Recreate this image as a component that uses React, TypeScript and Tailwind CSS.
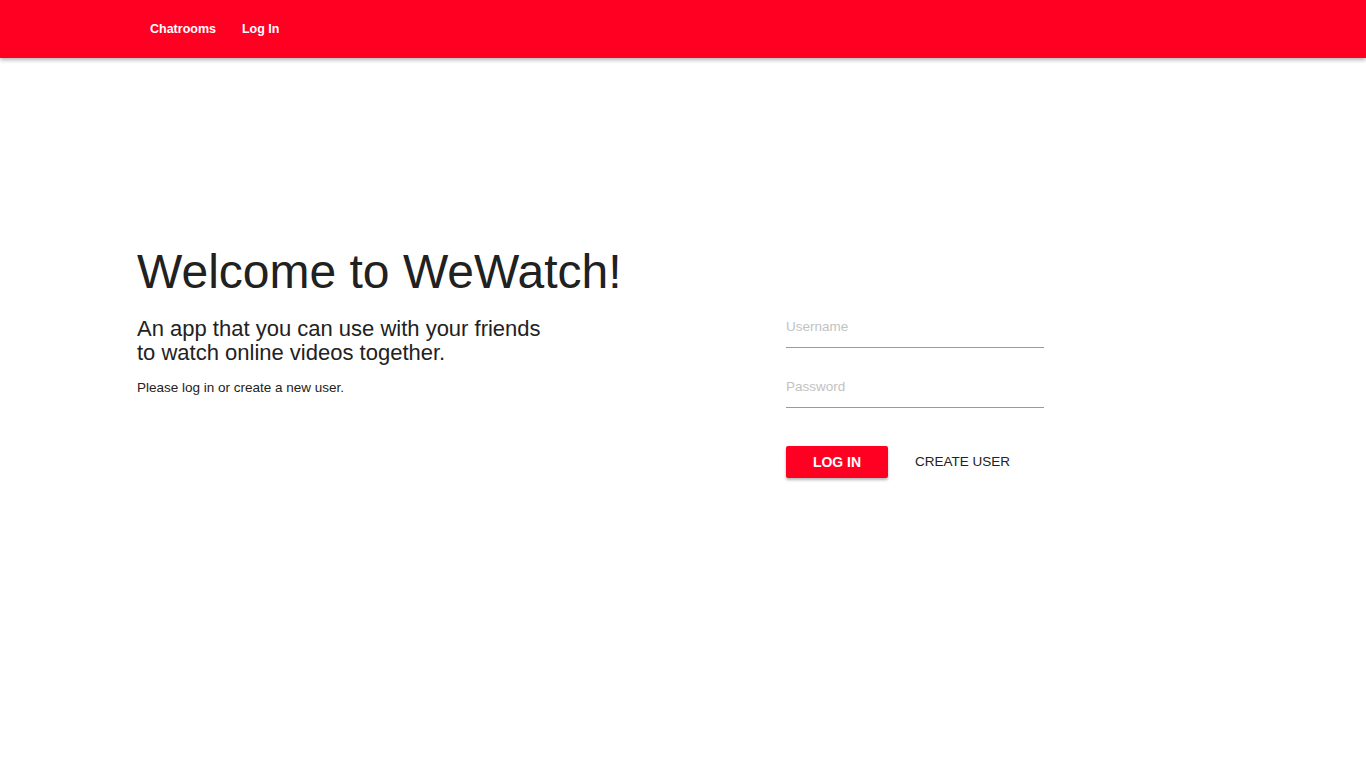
import React from "react";

const font = { fontFamily: '"Liberation Sans", Arial, Helvetica, sans-serif' };

const NavBar = () => {
  return (
    <div className="h-[58px] w-full bg-[#ff0022] shadow-[0_2px_4px_rgba(0,0,0,0.3)] flex items-center pl-[137px]">
      <button className="px-[13px] h-[36px] text-white font-bold text-[12.5px]">
        Chatrooms
      </button>
      <button className="px-[13px] h-[36px] text-white font-bold text-[12.5px]">
        Log In
      </button>
    </div>
  );
};

const LoginForm = () => {
  return (
    <div className="flex flex-col w-[258px] mt-[71px]">
      <input
        placeholder="Username"
        className="h-[33px] pb-[10px] w-full border-b border-[#9a9a9a] text-[13.5px] text-[#222] placeholder:text-[#c2c2c2] outline-none"
      />
      <input
        type="password"
        placeholder="Password"
        className="mt-[27px] h-[33px] pb-[10px] w-full border-b border-[#9a9a9a] text-[13.5px] text-[#222] placeholder:text-[#c2c2c2] outline-none"
      />
      <div className="flex items-center mt-[38px]">
        <button className="h-[32px] w-[102px] rounded-[2px] bg-[#ff0022] text-white font-bold text-[14px] shadow-[0_2px_3px_rgba(0,0,0,0.3)]">
          LOG IN
        </button>
        <button className="ml-[27px] text-[13.5px] text-[#222]">CREATE USER</button>
      </div>
    </div>
  );
};

export default function App() {
  return (
    <div className="min-h-[768px] w-full bg-white" style={font}>
      <NavBar />
      <div className="flex pl-[137px] mt-[186px]">
        <div className="w-[649px] flex flex-col">
          <h1 className="text-[48px] leading-[56px] text-[#212121]">
            Welcome to WeWatch!
          </h1>
          <p className="mt-[17px] text-[22px] leading-[24px] text-[#222]">
            An app that you can use with your friends
            <br />
            to watch online videos together.
          </p>
          <p className="mt-[13px] text-[13.5px] leading-[20px] text-[#222]">
            Please log in or create a new user.
          </p>
        </div>
        <LoginForm />
      </div>
    </div>
  );
}
